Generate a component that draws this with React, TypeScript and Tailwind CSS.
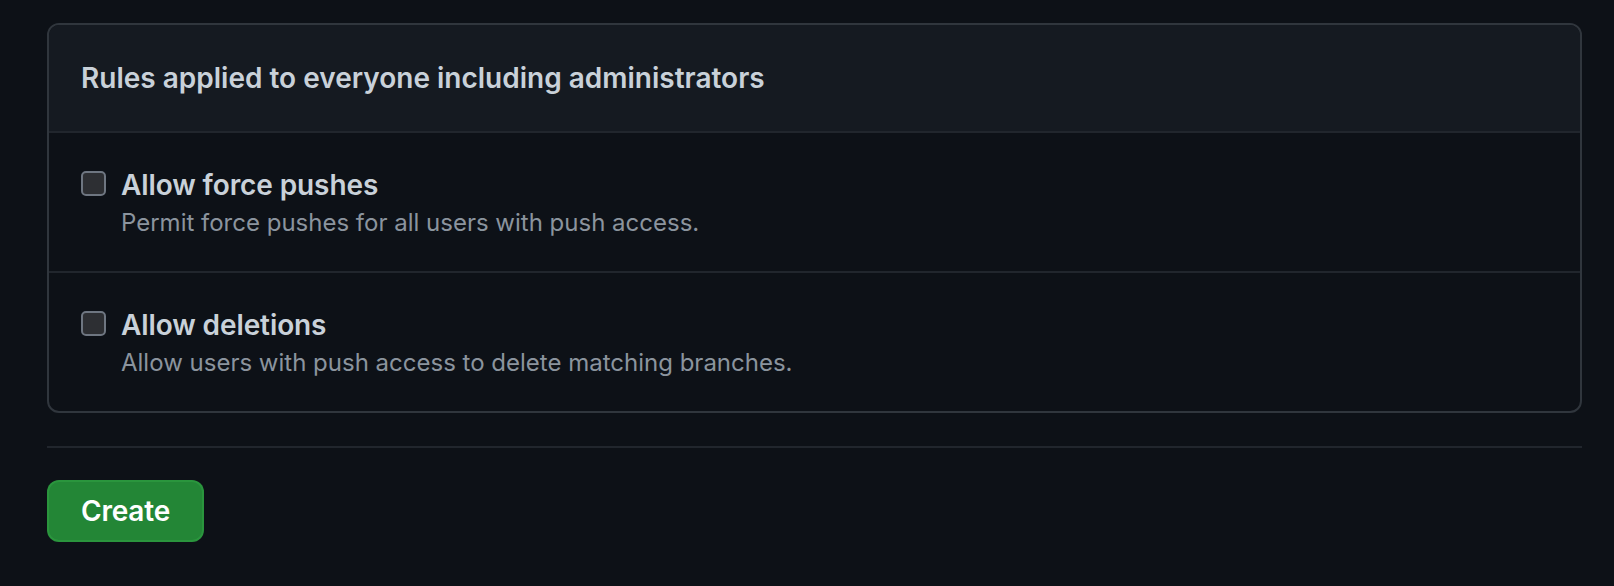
const rules = [
  {
    title: "Allow force pushes",
    note: "Permit force pushes for all users with push access.",
  },
  {
    title: "Allow deletions",
    note: "Allow users with push access to delete matching branches.",
  },
];

const RuleRow = ({ title, note }: { title: string; note: string }) => {
  return (
    <div className="flex gap-[15px] border-t-2 border-[#21262d] px-8 pt-8 pb-[30px]">
      <div className="mt-[6px] h-[25px] w-[25px] shrink-0 rounded-[5px] border-2 border-[#6e7681] bg-[#2d2f33]" />
      <div className="flex flex-col">
        <span className="text-[28px] font-semibold leading-[40px] tracking-[-0.1px] text-[#c9d1d9]">{title}</span>
        <span className="text-[24px] leading-[36px] text-[#8b949e]">{note}</span>
      </div>
    </div>
  );
};

const App = () => {
  return (
    <div
      className="min-h-[586px] w-full bg-[#0d1117] pl-[47px] pt-[23px]"
      style={{ fontFamily: "Inter, 'Liberation Sans', sans-serif" }}
    >
      <div className="w-[1535px]">
        <div className="overflow-hidden rounded-xl border-2 border-[#30363d]">
          <div className="bg-[#151a21] px-8 py-8">
            <h3 className="text-[28px] font-semibold leading-[42px] text-[#c9d1d9]">
              Rules applied to everyone including administrators
            </h3>
          </div>
          {rules.map((rule) => (
            <RuleRow key={rule.title} title={rule.title} note={rule.note} />
          ))}
        </div>
        <div className="mt-[33px] border-t-2 border-[#21262d]" />
        <button className="mt-8 rounded-xl border-2 border-[#2ea043]/60 bg-[#238636] px-8 py-[9px] text-[28px] font-semibold leading-[40px] tracking-[-0.2px] text-white">
          Create
        </button>
      </div>
    </div>
  );
};

export default App;
